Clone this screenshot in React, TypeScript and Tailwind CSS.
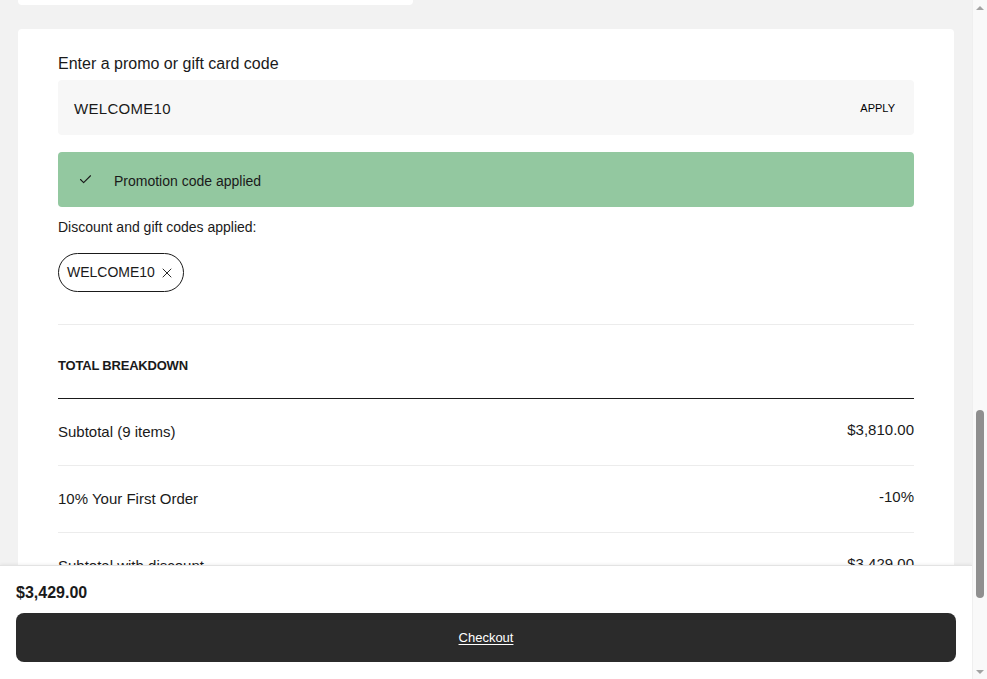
import { Check, X } from 'lucide-react';

const rows = [
  { label: 'Subtotal (9 items)', value: '$3,810.00' },
  { label: '10% Your First Order', value: '-10%' },
  { label: 'Subtotal with discount', value: '$3,429.00' },
];

function Scrollbar() {
  return (
    <div className="flex w-[15px] shrink-0 flex-col items-center bg-[#f9f9f9] border-l border-[#efefef]">
      <div className="flex h-[15px] items-center justify-center">
        <div className="h-0 w-0 border-x-[4px] border-b-[4px] border-x-transparent border-b-[#a3a3a3]" />
      </div>
      <div className="flex-1 w-full px-[3px]">
        <div className="mt-[395px] h-[188px] w-full rounded-full bg-[#8f8f8f]" />
      </div>
      <div className="flex h-[15px] items-center justify-center">
        <div className="h-0 w-0 border-x-[4px] border-t-[4px] border-x-transparent border-t-[#a3a3a3]" />
      </div>
    </div>
  );
}

export default function App() {
  return (
    <div
      className="flex h-[679px] w-full overflow-hidden bg-[#f2f2f2] text-[#1a1a1a]"
      style={{ fontFamily: '"Liberation Sans", Arial, sans-serif' }}
    >
      <div className="relative flex-1 overflow-hidden">
        {/* tail of the previous card */}
        <div className="ml-[18px] h-[5px] w-[395px] rounded-b bg-white" />

        <section className="mx-[18px] mt-6 rounded bg-white px-10 pt-6 pb-10">
          <label className="block text-[16px] leading-5 pt-px">Enter a promo or gift card code</label>
          <div className="mt-[6px] flex h-[55px] items-center justify-between rounded bg-[#f7f7f7] pl-4 pr-[19px]">
            <span className="pt-1 text-[15px] tracking-[0.3px]">WELCOME10</span>
            <button className="pt-px text-[11px] text-black">APPLY</button>
          </div>

          <div className="mt-[17px] flex h-[55px] items-center rounded bg-[#93c8a0] pl-[20px]">
            <Check size={15} strokeWidth={1.75} className="text-[#1a1a1a]" />
            <span className="ml-[21px] pt-[3px] text-[14px] font-medium">Promotion code applied</span>
          </div>

          <p className="mt-[10px] text-[14px] leading-5">Discount and gift codes applied:</p>

          <div className="mt-[16px] flex">
            <div className="flex h-[39px] items-center gap-[4px] rounded-full border border-[#1a1a1a] pl-2 pr-[8px]">
              <span className="text-[14px]">WELCOME10</span>
              <X size={16} strokeWidth={1.4} />
            </div>
          </div>

          <div className="mt-[32px] h-px bg-[#ececec]" />

          <h3 className="mt-[33px] text-[13px] font-bold leading-4 tracking-[-0.2px]">TOTAL BREAKDOWN</h3>

          <div className="mt-[24px] border-t border-[#1a1a1a]">
            {rows.map((row) => (
              <div
                key={row.label}
                className="flex h-[67px] items-center justify-between border-b border-[#ececec]"
              >
                <span className="text-[15px]">{row.label}</span>
                <span className="-mt-1 text-[15px] font-medium">{row.value}</span>
              </div>
            ))}
          </div>
        </section>

        {/* sticky checkout bar */}
        <div className="absolute inset-x-0 bottom-0 h-[114px] border-t border-[#e3e3e3] bg-white px-4 shadow-[0_-1px_3px_rgba(0,0,0,0.06)]">
          <div className="mt-[17px] text-[16px] font-bold leading-5">$3,429.00</div>
          <button className="mt-[10px] flex h-[49px] w-full items-center justify-center rounded-lg bg-[#2b2b2b] text-[13px] text-white underline underline-offset-2">
            Checkout
          </button>
        </div>
      </div>
      <Scrollbar />
    </div>
  );
}
